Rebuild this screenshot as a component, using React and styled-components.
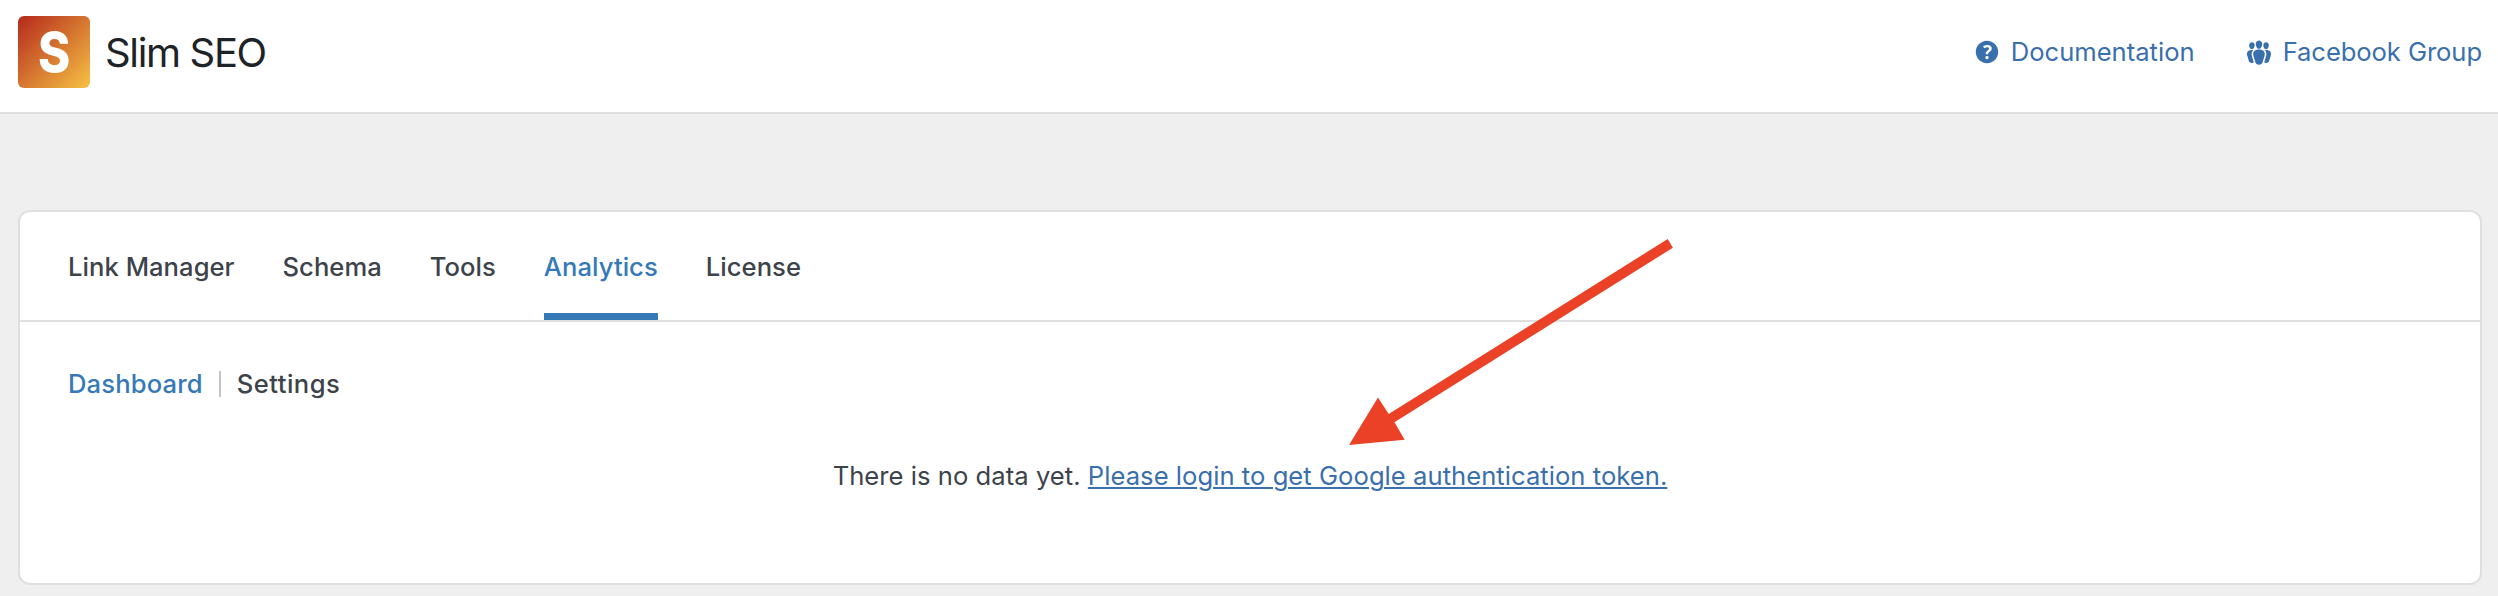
import React from 'react';
import styled, { createGlobalStyle } from 'styled-components';

const GlobalStyle = createGlobalStyle`
  * { box-sizing: border-box; }
  html, body { margin: 0; background: #efefef; }
  body { font-family: Inter, "Liberation Sans", sans-serif; font-size: 25.6px; color: #3c434a; }
  a { color: inherit; text-decoration: none; }
`;
const Page = styled.div`
  position: relative;
  height: 596px;
  overflow: hidden;
`;
const Header = styled.header`
  display: flex;
  align-items: center;
  justify-content: space-between;
  height: 114px;
  padding: 0 16px 8px 18px;
  background: #fff;
  border-bottom: 2px solid #dfdfdf;
`;
const Brand = styled.div`
  display: flex;
  align-items: center;
  gap: 15px;
`;
const Logo = styled.div`
  display: flex;
  align-items: center;
  justify-content: center;
  width: 72px;
  height: 72px;
  border-radius: 6px;
  background: linear-gradient(135deg, #b5291c, #f6c244);
`;
const LogoLetter = styled.span`
  color: #fff;
  font-size: 55px;
  font-weight: 800;
  line-height: 72px;
  transform: scaleX(0.89);
`;
const Title = styled.h1`
  margin: 0;
  padding-top: 2px;
  font-size: 40px;
  line-height: 48px;
  font-weight: 400;
  letter-spacing: -1.35px;
  color: #1d2327;
`;
const HelpNav = styled.nav`
  display: flex;
  gap: 48px;
  color: #3a6fae;
`;
const HelpLink = styled.a`
  display: flex;
  align-items: center;
  gap: 8px;
  line-height: 32px;
  letter-spacing: ${(p) => p.$track || '0'};
`;
const Icon = styled.svg`
  display: block;
  width: 32px;
  height: 32px;
  fill: currentColor;
`;
const Card = styled.main`
  margin: 96px 16px 0 18px;
  height: 375px;
  background: #fff;
  border: 2px solid #dfdfdf;
  border-radius: 12px;
`;
const Tabs = styled.nav`
  display: flex;
  gap: 48px;
  height: 110px;
  padding: 0 48px;
  border-bottom: 2px solid #dfdfdf;
`;
const Tab = styled.a`
  height: 108px;
  padding-top: 39px;
  line-height: 32px;
  font-weight: 500;
  letter-spacing: 0.04px;
  color: ${(p) => (p.$active ? '#357ab7' : '#3c434a')};
  border-bottom: 7px solid ${(p) => (p.$active ? '#357ab7' : 'transparent')};
`;
const SubTabs = styled.nav`
  display: flex;
  align-items: center;
  margin: 46px 48px 0;
  height: 32px;
`;
const SubTab = styled.a`
  line-height: 32px;
  font-weight: 500;
  letter-spacing: 0.15px;
  color: ${(p) => (p.$active ? '#357ab7' : '#3c434a')};
  & + & {
    margin-left: 16px;
    padding-left: 16px;
    line-height: 26px;
    letter-spacing: 0.45px;
    border-left: 2px solid #c3c4c7;
  }
`;
const Notice = styled.p`
  margin: 60px 0 0;
  line-height: 32px;
  letter-spacing: 0.04px;
  text-align: center;
`;
const LoginLink = styled.a`
  && {
    color: #3a6fae;
    text-decoration: underline;
    text-decoration-thickness: 2px;
    text-underline-offset: 2px;
  }
`;
const Arrow = styled.svg`
  position: absolute;
  left: 1340px;
  top: 230px;
  pointer-events: none;
`;

const HelpIcon = () => (
  <Icon viewBox="0 0 20 20">
    <path d="M17 10c0-3.87-3.14-7-7-7-3.87 0-7 3.13-7 7s3.13 7 7 7c3.86 0 7-3.13 7-7zm-6.3 1.48H9.14v-.43c0-.38.08-.7.24-.98s.46-.57.88-.89c.41-.29.68-.53.81-.71.14-.18.2-.39.2-.62 0-.25-.09-.44-.28-.58-.19-.13-.45-.19-.79-.19-.58 0-1.25.19-2 .57l-.64-1.28c.87-.49 1.8-.74 2.77-.74.81 0 1.45.2 1.92.58.48.39.71.91.71 1.55 0 .43-.09.8-.29 1.11-.19.32-.57.67-1.11 1.06-.38.28-.61.49-.71.63-.1.15-.15.34-.15.57v.35zm-1.47 2.74c-.18-.17-.27-.42-.27-.73 0-.33.08-.58.26-.75s.43-.25.77-.25c.32 0 .57.09.75.26s.27.42.27.74c0 .3-.09.55-.27.72-.18.18-.43.27-.75.27-.33 0-.58-.09-.76-.26z" />
  </Icon>
);

const sidePerson =
  'M3.9 5.36c-.25 1.08.47 2.93 1.67 2.93s1.92-1.85 1.67-2.93c-.19-.83-.92-1.39-1.67-1.39s-1.48.56-1.67 1.39zM6.07 9.16c-.7.9-.9 2-.42 3.59l1.12 3.79c-.34.2-.77.31-1.2.31-.85 0-1.65-.41-1.85-1.03l-1.07-3.65c-.65-2.11.61-3.4 2.92-3.4.28 0 .54.02.79.06-.1.1-.2.22-.29.33z';

const GroupsIcon = () => (
  <Icon viewBox="0 0 20 20">
    <path d="M8.03 4.46c-.29 1.28.55 3.46 1.97 3.46 1.41 0 2.25-2.18 1.96-3.46-.22-.98-1.08-1.63-1.96-1.63-.89 0-1.74.65-1.97 1.63zM12.17 16.79l1.26-4.3C14.2 10 12.71 8.47 10 8.47c-2.72 0-4.21 1.53-3.44 4.02l1.26 4.3C8.05 17.51 9 18 10 18c.98 0 1.94-.49 2.17-1.21z" />
    <path d={sidePerson} />
    <path d={sidePerson} transform="translate(20 0) scale(-1 1)" />
  </Icon>
);

const tabs = ['Link Manager', 'Schema', 'Tools', 'Analytics', 'License'];

export default function App() {
  return (
    <Page>
      <GlobalStyle />
      <Header>
        <Brand>
          <Logo><LogoLetter>S</LogoLetter></Logo>
          <Title>Slim SEO</Title>
        </Brand>
        <HelpNav>
          <HelpLink href="#"><HelpIcon />Documentation</HelpLink>
          <HelpLink href="#" $track="-0.08px"><GroupsIcon />Facebook Group</HelpLink>
        </HelpNav>
      </Header>
      <Card>
        <Tabs>
          {tabs.map((t) => <Tab key={t} href="#" $active={t === 'Analytics'}>{t}</Tab>)}
        </Tabs>
        <SubTabs>
          <SubTab href="#" $active>Dashboard</SubTab>
          <SubTab href="#">Settings</SubTab>
        </SubTabs>
        <Notice>
          There is no data yet. <LoginLink href="#">Please login to get Google authentication token.</LoginLink>
        </Notice>
      </Card>
      <Arrow width="340" height="220" viewBox="1340 230 340 220" fill="#ea4127">
        <path d="M1667.7 239l5.2 8.7L1394.4 422.3l10.3 17.4L1349 445l29-47.6 10.7 16.7z" />
      </Arrow>
    </Page>
  );
}
